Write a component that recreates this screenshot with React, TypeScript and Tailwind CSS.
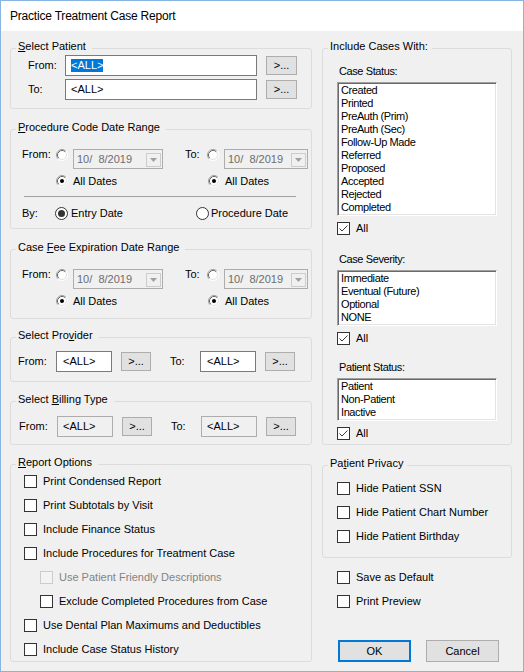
import React from 'react';

type Node = React.ReactNode;

function GroupBox({ caption, className = '', capPad = 'pr-[6px]', children }: { caption: Node; className?: string; capPad?: string; children: Node }) {
  return (
    <div className={`rounded-[3px] border border-[#dcdcdc] ${className}`}>
      <div className={`-mt-[10px] ml-[5px] w-fit bg-[#f0f0f0] pl-[2px] leading-[14px] ${capPad}`}>{caption}</div>
      {children}
    </div>
  );
}

function CheckBox({ checked = false, disabled = false }: { checked?: boolean; disabled?: boolean }) {
  return (
    <span
      className={`flex h-[13px] w-[13px] shrink-0 items-center justify-center border ${
        disabled ? 'border-[#cccccc] bg-[#f3f3f3]' : 'border-[#333333] bg-white'
      }`}
    >
      {checked && (
        <svg width="11" height="11" viewBox="0 0 11 11">
          <path d="M1.5 5.5 L4 8 L9.5 2.5" fill="none" stroke="#3c3c3c" strokeWidth="1" />
        </svg>
      )}
    </span>
  );
}

function CheckRow({ label, checked, disabled, className = '' }: { label: string; checked?: boolean; disabled?: boolean; className?: string }) {
  return (
    <div className={`flex h-[13px] items-center ${className}`}>
      <CheckBox checked={checked} disabled={disabled} />
      <span className={`ml-[6px] whitespace-nowrap ${disabled ? 'text-[#838383]' : ''}`}>{label}</span>
    </div>
  );
}

// old style 3d radio used in the date ranges
function ClassicRadio({ checked = false }: { checked?: boolean }) {
  return (
    <svg width="12" height="12" viewBox="0 0 12 12" className="shrink-0">
      <circle cx="6" cy="6" r="5" fill="#ffffff" />
      <path d="M2.11 9.89 A5.5 5.5 0 0 1 9.89 2.11" fill="none" stroke="#a0a0a0" />
      <path d="M9.89 2.11 A5.5 5.5 0 0 1 2.11 9.89" fill="none" stroke="#ffffff" />
      <path d="M2.82 9.18 A4.5 4.5 0 0 1 9.18 2.82" fill="none" stroke="#696969" />
      <path d="M9.18 2.82 A4.5 4.5 0 0 1 2.82 9.18" fill="none" stroke="#e3e3e3" />
      {checked && <circle cx="6" cy="6" r="2" fill="#000000" />}
    </svg>
  );
}

function ModernRadio({ checked = false }: { checked?: boolean }) {
  return (
    <svg width="13" height="13" viewBox="0 0 13 13" className="shrink-0">
      <circle cx="6.5" cy="6.5" r="6" fill="#ffffff" stroke="#333333" />
      {checked && <circle cx="6.5" cy="6.5" r="3.5" fill="#333333" />}
    </svg>
  );
}

function DateBox({ className }: { className: string }) {
  return (
    <div className={`flex h-[20px] items-center justify-between border border-[#adadad] bg-[#f0f0f0] pl-[3px] pr-px ${className}`}>
      <span className="whitespace-pre text-[#6d6d6d]">10/  8/2019</span>
      <span className="mt-px flex h-[14px] w-[15px] items-center justify-center border border-[#cccccc] bg-[#f0f0f0]">
        <svg width="7" height="4" viewBox="0 0 7 4">
          <path d="M0 0 H7 L3.5 4 Z" fill="#a0a0a0" />
        </svg>
      </span>
    </div>
  );
}

function DateRows() {
  return (
    <>
      <div className="mt-[15px] flex h-[20px] items-start pl-[11px]">
        <span className="-mt-[2px] w-[34px] leading-[14px]">From:</span>
        <ClassicRadio />
        <DateBox className="ml-[5px] w-[90px]" />
        <span className="-mt-[2px] ml-[22px] w-[22px] leading-[14px]">To:</span>
        <ClassicRadio />
        <DateBox className="ml-[5px] w-[84px]" />
      </div>
      <div className="mt-[6px] flex h-[12px] items-center pl-[45px]">
        <div className="flex w-[152px] items-center">
          <ClassicRadio checked />
          <span className="ml-[5px]">All Dates</span>
        </div>
        <div className="flex items-center">
          <ClassicRadio checked />
          <span className="ml-[5px]">All Dates</span>
        </div>
      </div>
    </>
  );
}

function BrowseButton({ className = '' }: { className?: string }) {
  return (
    <div className={`flex h-[19px] items-center justify-center border border-[#adadad] bg-[#e1e1e1] ${className}`}>
      {'>...'}
    </div>
  );
}

function ListBox({ items, className }: { items: string[]; className: string }) {
  return (
    <div
      className={`ml-[14px] mt-[4px] w-[160px] border border-b-white border-l-[#a0a0a0] border-r-white border-t-[#a0a0a0] bg-white pl-[3px] pt-px shadow-[inset_1px_1px_0_#696969,inset_-1px_-1px_0_#e3e3e3] ${className}`}
    >
      {items.map((it) => (
        <div key={it} className="leading-[13px] tracking-[-0.4px]">
          {it}
        </div>
      ))}
    </div>
  );
}

export default function App() {
  const reportOptions = [
    { label: 'Print Condensed Report' },
    { label: 'Print Subtotals by Visit' },
    { label: 'Include Finance Status' },
    { label: 'Include Procedures for Treatment Case' },
    { label: 'Use Patient Friendly Descriptions', indent: true, disabled: true },
    { label: 'Exclude Completed Procedures from Case', indent: true },
    { label: 'Use Dental Plan Maximums and Deductibles' },
    { label: 'Include Case Status History' },
  ];

  return (
    <div className="flex h-[672px] w-[524px] flex-col border border-[#88b4e4] bg-[#f0f0f0] font-['Liberation_Sans',Arial,sans-serif] text-[11px] text-black">
      <div className="flex h-[30px] items-center bg-white pl-[9px] text-[12px] tracking-[-0.2px]">Practice Treatment Case Report</div>

      <div className="flex pl-[9px]">
        {/* left column */}
        <div className="flex w-[302px] flex-col">
          <GroupBox className="mt-[17px] pb-[8px]" caption={<><u>S</u>elect Patient</>}>
            <div className="mt-[2px] flex flex-col gap-[3px] pl-[17px]">
              <div className="flex h-[21px] items-center">
                <span className="w-[37px]">From:</span>
                <div className="flex h-[21px] w-[192px] items-center border border-[#7a7a7a] bg-white pl-[5px]">
                  <span className="bg-[#0078d7] leading-[13px] text-white">{'<ALL>'}</span>
                </div>
                <BrowseButton className="ml-[9px] w-[31px]" />
              </div>
              <div className="flex h-[21px] items-center">
                <span className="w-[37px]">To:</span>
                <div className="flex h-[21px] w-[192px] items-center border border-[#7a7a7a] bg-white pl-[5px]">{'<ALL>'}</div>
                <BrowseButton className="ml-[9px] w-[31px]" />
              </div>
            </div>
          </GroupBox>

          <GroupBox className="mt-[20px] pb-[8px]" caption={<><u>P</u>rocedure Code Date Range</>}>
            <DateRows />
            <div className="ml-[13px] mt-[9px] h-px w-[272px] bg-[#a0a0a0]" />
            <div className="mt-[10px] flex h-[13px] items-center pl-[11px]">
              <span className="w-[33px]">By:</span>
              <div className="flex w-[141px] items-center">
                <ModernRadio checked />
                <span className="ml-[3px]">Entry Date</span>
              </div>
              <div className="flex items-center">
                <ModernRadio />
                <span className="ml-[2px]">Procedure Date</span>
              </div>
            </div>
          </GroupBox>

          <GroupBox className="mt-[20px] pb-[11px]" caption={<>Case <u>F</u>ee Expiration Date Range</>}>
            <DateRows />
          </GroupBox>

          <GroupBox className="mt-[18px] pb-[9px]" caption={<>Select Pro<u>v</u>ider</>}>
            <div className="mt-[9px] flex h-[21px] items-center pl-[7px]">
              <span className="w-[38px]">From:</span>
              <div className="flex h-[21px] w-[56px] items-center border border-[#7a7a7a] bg-white pl-[6px]">{'<ALL>'}</div>
              <BrowseButton className="ml-[9px] w-[30px]" />
              <span className="ml-[19px] w-[30px]">To:</span>
              <div className="flex h-[21px] w-[56px] items-center border border-[#7a7a7a] bg-white pl-[6px]">{'<ALL>'}</div>
              <BrowseButton className="ml-[9px] w-[30px]" />
            </div>
          </GroupBox>

          <GroupBox className="mt-[19px] pb-[7px]" caption={<>Select <u>B</u>illing Type</>}>
            <div className="mt-[10px] flex h-[21px] items-center pl-[8px]">
              <span className="w-[38px]">From:</span>
              <div className="flex h-[21px] w-[56px] items-center border border-[#adadad] bg-[#f0f0f0] pl-[5px]">{'<ALL>'}</div>
              <BrowseButton className="ml-[9px] w-[30px]" />
              <span className="ml-[19px] w-[30px]">To:</span>
              <div className="flex h-[21px] w-[56px] items-center border border-[#adadad] bg-[#f0f0f0] pl-[5px]">{'<ALL>'}</div>
              <BrowseButton className="ml-[9px] w-[30px]" />
            </div>
          </GroupBox>

          <GroupBox className="mt-[19px] pb-[5px]" caption={<><u>R</u>eport Options</>}>
            <div className="mt-[6px] flex flex-col gap-[11px] pl-[13px]">
              {reportOptions.map((o) => (
                <CheckRow key={o.label} label={o.label} disabled={o.disabled} className={o.indent ? 'ml-[16px]' : ''} />
              ))}
            </div>
          </GroupBox>
        </div>

        {/* right column */}
        <div className="ml-[10px] flex w-[190px] flex-col">
          <GroupBox className="mt-[17px] pb-[4px]" capPad="pr-[4px]" caption="Include Cases With:">
            <div className="ml-[16px] mt-[11px] leading-[14px] tracking-[-0.4px]">Case Status:</div>
            <ListBox
              className="h-[134px]"
              items={['Created', 'Printed', 'PreAuth (Prim)', 'PreAuth (Sec)', 'Follow-Up Made', 'Referred', 'Proposed', 'Accepted', 'Rejected', 'Completed']}
            />
            <CheckRow label="All" checked className="ml-[14px] mt-[6px]" />

            <div className="ml-[16px] mt-[17px] leading-[14px] tracking-[-0.4px]">Case Severity:</div>
            <ListBox className="h-[56px]" items={['Immediate', 'Eventual (Future)', 'Optional', 'NONE']} />
            <CheckRow label="All" checked className="ml-[14px] mt-[6px]" />

            <div className="ml-[16px] mt-[15px] leading-[14px] tracking-[-0.4px]">Patient Status:</div>
            <ListBox className="h-[43px]" items={['Patient', 'Non-Patient', 'Inactive']} />
            <CheckRow label="All" checked className="ml-[14px] mt-[6px]" />
          </GroupBox>

          <GroupBox className="mt-[20px] pb-[14px]" capPad="pr-[4px]" caption={<>Pa<u>t</u>ient Privacy</>}>
            <div className="mt-[12px] flex flex-col gap-[11px] pl-[14px]">
              <CheckRow label="Hide Patient SSN" />
              <CheckRow label="Hide Patient Chart Number" />
              <CheckRow label="Hide Patient Birthday" />
            </div>
          </GroupBox>

          <div className="ml-[15px] mt-[13px] flex flex-col gap-[11px]">
            <CheckRow label="Save as Default" />
            <CheckRow label="Print Preview" />
          </div>

          <div className="mt-[32px] flex">
            <div className="ml-[16px] flex h-[22px] w-[73px] items-center justify-center border-2 border-[#0078d7] bg-[#e1e1e1]">OK</div>
            <div className="ml-[15px] flex h-[22px] w-[73px] items-center justify-center border border-[#adadad] bg-[#e1e1e1]">Cancel</div>
          </div>
        </div>
      </div>
    </div>
  );
}
